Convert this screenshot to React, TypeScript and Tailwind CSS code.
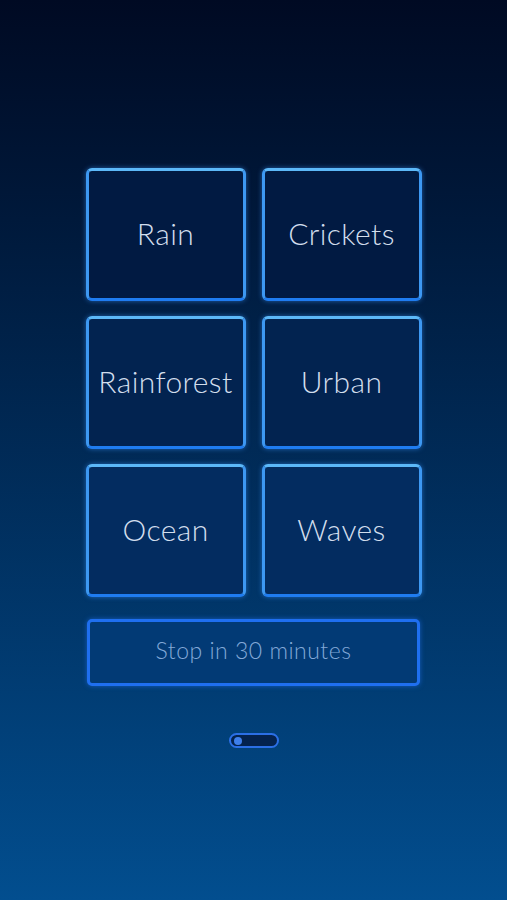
const sounds = ['Rain', 'Crickets', 'Rainforest', 'Urban', 'Ocean', 'Waves'];

const tileBg = ['bg-[#011a42]', 'bg-[#011a42]', 'bg-[#022350]', 'bg-[#022350]', 'bg-[#032c60]', 'bg-[#032c60]'];

export default function App() {
  return (
    <div
      className="w-full h-[900px] bg-gradient-to-b from-[#000a23] to-[#024e8f] flex flex-col items-center pt-[168px]"
      style={{ fontFamily: 'Lato, "Open Sans", sans-serif' }}
    >
      <div className="grid grid-cols-2 gap-x-[16px] gap-y-[15px] w-[336px]">
        {sounds.map((name, i) => (
          <button
            key={name}
            className={`h-[133px] rounded-[6px] border-[3px] border-t-[#5cb8f8] border-x-[#3d98f2] border-b-[#1f7cf0] shadow-[0_0_5px_rgba(60,150,255,0.55)] flex items-center justify-center ${tileBg[i]}`}
          >
            <span className="text-[30px] font-light text-[#d2deed] tracking-[0.4px] -mt-[2px]">{name}</span>
          </button>
        ))}
      </div>

      <button className="mt-[22px] w-[333px] h-[67px] rounded-[5px] border-[3px] border-[#1f6ff0] shadow-[0_0_5px_rgba(40,120,255,0.55)] bg-[#023a75] flex items-center justify-center">
        <span className="text-[23px] font-light text-[#82a9d8] tracking-[0.5px] -mt-[4px]">Stop in 30 minutes</span>
      </button>

      <div className="mt-[47px] w-[50px] h-[15px] rounded-full border-2 border-[#2b6fe6] bg-[#04234f] flex items-center pl-[3px]">
        <div className="w-[8px] h-[8px] rounded-full bg-[#3e7fec]" />
      </div>
    </div>
  );
}
